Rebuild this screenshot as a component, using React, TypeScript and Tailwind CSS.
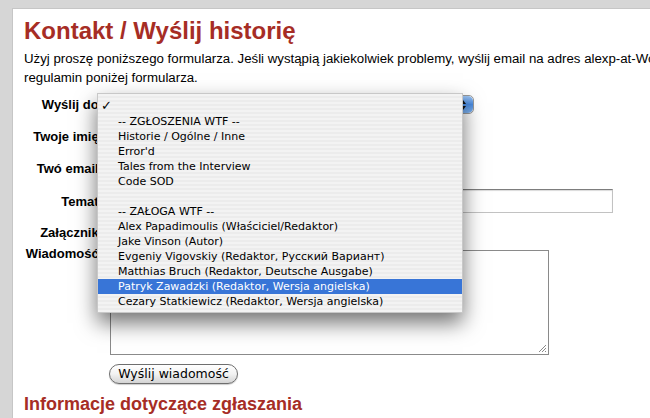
const MENU_ITEMS = [
  { label: "", checked: true },
  { label: "-- ZGŁOSZENIA WTF --" },
  { label: "Historie / Ogólne / Inne" },
  { label: "Error'd" },
  { label: "Tales from the Interview" },
  { label: "Code SOD" },
  { label: "" },
  { label: "-- ZAŁOGA WTF --" },
  { label: "Alex Papadimoulis (Właściciel/Redaktor)" },
  { label: "Jake Vinson (Autor)" },
  { label: "Evgeniy Vigovskiy (Redaktor, Русский Вариант)" },
  { label: "Matthias Bruch (Redaktor, Deutsche Ausgabe)" },
  { label: "Patryk Zawadzki (Redaktor, Wersja angielska)", active: true },
  { label: "Cezary Statkiewicz (Redaktor, Wersja angielska)" },
] as const;

const inputCls =
  "border border-[#c2c2c2] border-t-[#7d7d7d] bg-white shadow-[inset_0_1px_1px_rgba(0,0,0,0.15)]";

function Row({ label, top = false, children }: { label: string; top?: boolean; children: React.ReactNode }) {
  return (
    <div className={`flex ${top ? "items-start" : "items-center"} gap-x-[7px]`}>
      <span
        className={`w-[79px] shrink-0 text-right text-[13px] font-bold leading-[15px] text-black ${top ? "-mt-[4px]" : ""}`}
      >
        {label}
      </span>
      {children}
    </div>
  );
}

export default function App() {
  return (
    <div className="relative h-[418px] w-[650px] overflow-hidden bg-[#d6d6d6] pl-[12px] pt-[8px] font-['Liberation_Sans',Arial,sans-serif]">
      <div className="h-[420px] w-[800px] border-l border-t border-[#c6c6c6] bg-white pl-[11px] pt-[8px]">
        <h1 className="text-[24px] font-bold leading-[28px] text-[#a62d25]">Kontakt / Wyślij historię</h1>
        <p className="mt-[4px] text-[13.25px] leading-[19px] text-black">
          <span className="whitespace-nowrap">
            Użyj proszę poniższego formularza. Jeśli wystąpią jakiekolwiek problemy, wyślij email na adres
            alexp-at-WorseThanFailure-dot-com. Przeczytaj też
          </span>
          <br />
          regulamin poniżej formularza.
        </p>

        <form className="mt-[8px] flex flex-col">
          <Row label="Wyślij do:">
            <div className="flex h-[19px] w-[364px] items-stretch rounded-[5px] border border-[#9a9a9a] bg-gradient-to-b from-white to-[#e6e6e6]">
              <div className="flex-1" />
              <div className="flex w-[20px] flex-col items-center justify-center gap-[2px] rounded-r-[5px] bg-gradient-to-b from-[#9cc4f2] via-[#4a8be0] to-[#7fb3f0]">
                <span className="h-0 w-0 border-x-[3px] border-b-[4px] border-x-transparent border-b-[#111]" />
                <span className="h-0 w-0 border-x-[3px] border-t-[4px] border-x-transparent border-t-[#111]" />
              </div>
            </div>
          </Row>
          <div className="mt-[10px]">
            <Row label="Twoje imię:">
              <div className={`h-[25px] w-[353px] ${inputCls}`} />
            </Row>
          </div>
          <div className="mt-[7px]">
            <Row label="Twó email:">
              <div className={`h-[25px] w-[353px] ${inputCls}`} />
            </Row>
          </div>
          <div className="mt-[8px]">
            <Row label="Temat:">
              <div className={`h-[24px] w-[503px] ${inputCls}`} />
            </Row>
          </div>
          <div className="mt-[9px]">
            <Row label="Załącznik:">
              <div className="h-[20px] w-[250px]" />
            </Row>
          </div>
          <div className="mt-[8px]">
            <Row label="Wiadomość:" top>
              <div className="relative h-[105px] w-[439px] border border-[#8a8a8a] bg-white">
                <svg className="absolute bottom-[1px] right-[1px]" width="9" height="9" viewBox="0 0 9 9">
                  <path d="M8 1 L1 8 M8 4 L4 8 M8 7 L7 8" stroke="#8a8a8a" strokeWidth="1" />
                </svg>
              </div>
            </Row>
          </div>
          <div className="mt-[9px] flex pl-[85px]">
            <button
              type="button"
              className="h-[20px] w-[129px] rounded-full border border-[#6e6e6e] bg-gradient-to-b from-white via-[#f2f2f2] to-[#d4d4d4] font-['DejaVu_Sans',sans-serif] text-[12.5px] leading-[18px] text-black shadow-[0_1px_1px_rgba(0,0,0,0.2)]"
            >
              Wyślij wiadomość
            </button>
          </div>
        </form>

        <h2 className="mt-[10px] text-[18px] font-bold leading-[20px] text-[#a62d25]">
          Informacje dotyczące zgłaszania
        </h2>
      </div>

      {/* open select menu */}
      <ul className="absolute left-[97px] top-[93px] h-[220px] w-[366px] border border-[#c8c8c8] bg-[repeating-linear-gradient(180deg,#f3f3f3_0px,#f3f3f3_2px,#ececec_2px,#ececec_4px)] pb-[4px] pt-[5px] font-['DejaVu_Sans',sans-serif] text-[11px] text-black shadow-[0_10px_20px_rgba(0,0,0,0.55)]">
        {MENU_ITEMS.map((item, i) => (
          <li
            key={i}
            className={`relative h-[15px] whitespace-nowrap pl-[20px] leading-[15px] ${
              "active" in item && item.active ? "bg-[#3875d7] text-white" : ""
            }`}
          >
            {"checked" in item && item.checked && (
              <span className="absolute left-[3px] top-[-1px] text-[13px] leading-[15px]">✓</span>
            )}
            {item.label}
          </li>
        ))}
      </ul>
    </div>
  );
}
